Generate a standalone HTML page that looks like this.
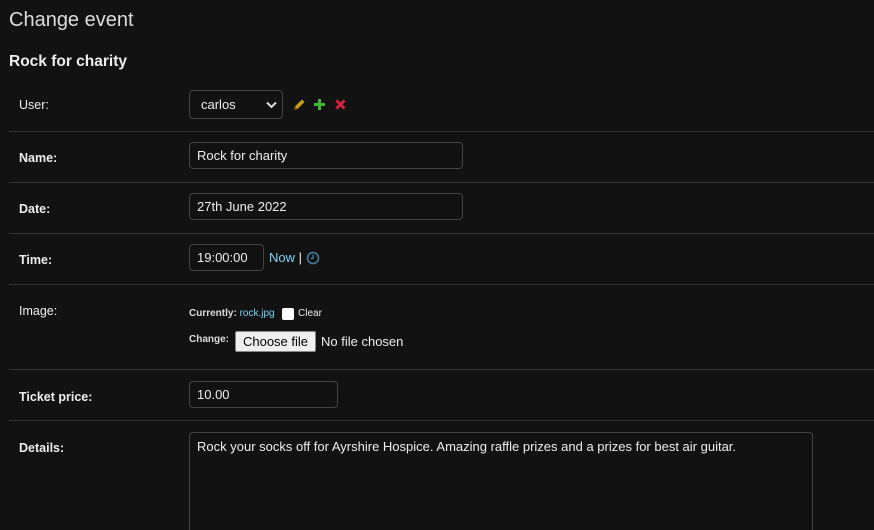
<!DOCTYPE html><html style="overflow:hidden"><head><style>
body{margin:0;background:#121212;color:#eee;font-family:"Liberation Sans",sans-serif;width:874px;height:530px;overflow:hidden;position:relative;font-size:13px}
.a{position:absolute}
.l{position:absolute;left:19px;font-size:12.5px;color:#eee}
.b{font-weight:bold}
.hr{position:absolute;left:9px;right:0;height:1px;background:#333}
.in{position:absolute;border:1px solid #444;border-radius:4px;box-sizing:border-box;background:#121212;padding-left:7px;font-size:13px;color:#eee;display:flex;align-items:center}
</style></head><body>
<div class="a" style="left:9px;top:9px;font-size:20px;font-weight:300;color:#ddd">Change event</div>
<div class="a b" style="left:9px;top:53px;font-size:15.5px">Rock for charity</div>
<div class="l" style="top:98px">User:</div>
<div class="in" style="left:189px;top:90px;width:94px;height:29px;padding-left:11px">carlos<svg class="a" style="left:76px;top:10px" width="11" height="8"><path d="M1 1.5l4.5 4.5 4.5-4.5" stroke="#ddd" stroke-width="2" fill="none"/></svg></div>
<svg class="a" style="left:293px;top:98px" width="13" height="13"><path d="M1 12l1-3.5 7-7 2.5 2.5-7 7z" fill="#c9a012"/><path d="M1 12l1-3.5 2.5 2.5z" fill="#7a5a00"/></svg>
<svg class="a" style="left:314px;top:99px" width="11" height="11"><path d="M4 0h3v4h4v3H7v4H4V7H0V4h4z" fill="#3cb834"/></svg>
<svg class="a" style="left:335px;top:99px" width="11" height="11"><path d="M1.5 1.5l8 8M9.5 1.5l-8 8" stroke="#d3233a" stroke-width="3"/></svg>
<div class="hr" style="top:131px"></div>
<div class="l b" style="top:151px">Name:</div>
<div class="in" style="left:189px;top:142px;width:274px;height:27px">Rock for charity</div>
<div class="hr" style="top:182px"></div>
<div class="l b" style="top:202px">Date:</div>
<div class="in" style="left:189px;top:193px;width:274px;height:27px">27th June 2022</div>
<div class="hr" style="top:233px"></div>
<div class="l b" style="top:253px">Time:</div>
<div class="in" style="left:189px;top:244px;width:75px;height:27px">19:00:00</div>
<div class="a" style="left:269px;top:250px;color:#79d4f7">Now <span style="color:#eee">|</span></div>
<svg class="a" style="left:306px;top:251px" width="14" height="14"><circle cx="7" cy="7" r="5.5" stroke="#447e9b" stroke-width="1.6" fill="none"/><path d="M7 3.5V7.5H4.5" stroke="#447e9b" stroke-width="1.3" fill="none"/></svg>
<div class="hr" style="top:284px"></div>
<div class="l" style="top:304px">Image:</div>
<div class="a" style="left:189px;top:308px;font-size:10px"><b style="color:#ddd">Currently:</b> <span style="color:#79d4f7">rock.jpg</span></div>
<div class="a" style="left:282px;top:308px;width:12px;height:12px;background:#fff;border-radius:2px"></div>
<div class="a" style="left:298px;top:308px;font-size:10px">Clear</div>
<div class="a b" style="left:189px;top:334px;font-size:10px;color:#ddd">Change:</div>
<div class="a" style="left:235px;top:331px;width:81px;height:21px;background:#efefef;border:1px solid #888;border-radius:2px;box-sizing:border-box;color:#000;font-size:13px;text-align:center;line-height:19px">Choose file</div>
<div class="a" style="left:321px;top:334px;font-size:13px">No file chosen</div>
<div class="hr" style="top:369px"></div>
<div class="l b" style="top:390px">Ticket price:</div>
<div class="in" style="left:189px;top:381px;width:149px;height:27px">10.00</div>
<div class="hr" style="top:420px"></div>
<div class="l b" style="top:441px">Details:</div>
<div class="in" style="left:189px;top:432px;width:624px;height:98px;align-items:flex-start;padding-top:6px;border-bottom:none;border-radius:4px 4px 0 0">Rock your socks off for Ayrshire Hospice. Amazing raffle prizes and a prizes for best air guitar.</div>
</body></html>
